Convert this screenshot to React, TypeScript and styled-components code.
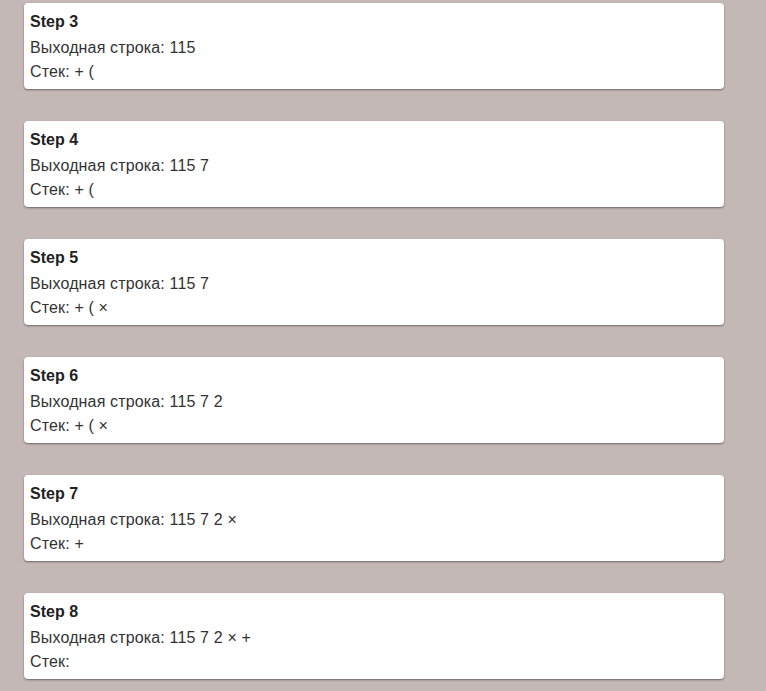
import React from "react";
import styled, { createGlobalStyle } from "styled-components";

const Global = createGlobalStyle`
  html, body {
    margin: 0;
    padding: 0;
    background: #c4b8b7;
  }
  body {
    font-family: "Liberation Sans", Arial, sans-serif;
    color: #333;
  }
`;

const Page = styled.div`
  display: flex;
  flex-direction: column;
  gap: 32px;
  padding: 3px 0 12px 24px;
  width: 700px;
`;

const Card = styled.div`
  background: #fff;
  border-radius: 4px;
  box-shadow: 0 1px 2px rgba(0, 0, 0, 0.45);
  padding: 7px 6px 5px 6px;
  height: 86px;
  box-sizing: border-box;
  display: flex;
  flex-direction: column;
`;

const Title = styled.div`
  font-weight: bold;
  font-size: 16px;
  line-height: 24px;
  margin-bottom: 2px;
  color: #222;
`;

const Line = styled.div`
  font-size: 16px;
  line-height: 24px;
  letter-spacing: 0.15px;
  color: #333;
`;

const steps = [
  { n: 3, out: "115", stack: "+ (" },
  { n: 4, out: "115 7", stack: "+ (" },
  { n: 5, out: "115 7", stack: "+ ( ×" },
  { n: 6, out: "115 7 2", stack: "+ ( ×" },
  { n: 7, out: "115 7 2 ×", stack: "+" },
  { n: 8, out: "115 7 2 × +", stack: "" },
];

export default function App() {
  return (
    <>
      <Global />
      <Page>
        {steps.map((s) => (
          <Card key={s.n}>
            <Title>Step {s.n}</Title>
            <Line>Выходная строка: {s.out}</Line>
            <Line>Стек: {s.stack}</Line>
          </Card>
        ))}
      </Page>
    </>
  );
}
